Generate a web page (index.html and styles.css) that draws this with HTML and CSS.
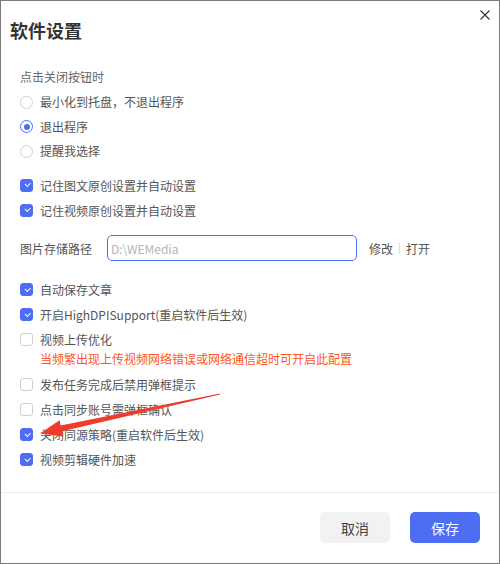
FILE: index.html
```html
<!DOCTYPE html>
<html lang="zh-CN">
<head>
    <meta charset="UTF-8">
    <meta name="viewport" content="width=device-width, initial-scale=1.0">
    <title>软件设置</title>
    <link rel="stylesheet" href="styles.css">
</head>
<body>
    <div class="dialog">
        <div class="dialog-header">
            <h1 class="dialog-title">软件设置</h1>
            <button class="close-btn" aria-label="关闭">
                <svg width="10" height="10" viewBox="0 0 10 10"><path d="M0.5 0.5 L9.5 9.5 M9.5 0.5 L0.5 9.5" stroke="#333" stroke-width="1.1" fill="none"/></svg>
            </button>
        </div>

        <div class="dialog-body">
            <div class="section-label">点击关闭按钮时</div>
            <div class="group radios">
                <label class="row"><span class="radio"></span>最小化到托盘，不退出程序</label>
                <label class="row"><span class="radio on"></span>退出程序</label>
                <label class="row"><span class="radio"></span>提醒我选择</label>
            </div>

            <div class="group checks-a">
                <label class="row"><span class="check on"></span>记住图文原创设置并自动设置</label>
                <label class="row"><span class="check on"></span>记住视频原创设置并自动设置</label>
            </div>

            <div class="path-row">
                <span class="path-label">图片存储路径</span>
                <input class="path-input" type="text" value="D:\WEMedia" readonly>
                <a class="link">修改</a>
                <span class="sep"></span>
                <a class="link">打开</a>
            </div>

            <div class="group checks-b">
                <label class="row"><span class="check on"></span>自动保存文章</label>
                <label class="row"><span class="check on"></span>开启HighDPISupport(重启软件后生效)</label>
                <label class="row"><span class="check"></span>视频上传优化</label>
                <div class="warning">当频繁出现上传视频网络错误或网络通信超时可开启此配置</div>
                <label class="row"><span class="check"></span>发布任务完成后禁用弹框提示</label>
                <label class="row"><span class="check"></span>点击同步账号需弹框确认</label>
                <label class="row"><span class="check on"></span>关闭同源策略(重启软件后生效)</label>
                <label class="row"><span class="check on"></span>视频剪辑硬件加速</label>
            </div>
        </div>

        <div class="dialog-footer">
            <button class="btn btn-cancel">取消</button>
            <button class="btn btn-save">保存</button>
        </div>
    </div>

    <svg class="annotation" width="500" height="564" viewBox="0 0 500 564">
        <polygon points="220.1,394.5 219.9,393.4 60.6,425.6 59.6,420.2 40,433.5 63.4,436.4 62.2,431.2" fill="#ee3b2c"/>
    </svg>
</body>
</html>
```

FILE: styles.css
```css
* { box-sizing: border-box; }
html, body { margin: 0; padding: 0; }
body { width: 500px; height: 564px; background: #fff; font-family: "Noto Sans CJK SC", "Noto Sans", sans-serif; font-size: 12px; color: #555; }

.dialog { width: 500px; height: 564px; border: 1px solid #7b7b7b; display: flex; flex-direction: column; }

.dialog-header { display: flex; justify-content: space-between; align-items: flex-start; padding: 0 9px 0 9px; }
.dialog-title { margin: 17px 0 0 0; font-size: 18px; line-height: 24px; font-weight: bold; color: #333; }
.close-btn { margin-top: 9px; width: 10px; height: 10px; padding: 0; border: none; background: none; display: flex; cursor: pointer; }

.dialog-body { flex: 1; padding-left: 19px; }
.section-label { margin-top: 25px; height: 20px; line-height: 20px; color: #666; }

.row { display: flex; align-items: center; gap: 7px; height: 25px; line-height: 25px; white-space: nowrap; }
.radios { margin-top: 3px; }
.radios .row { height: 24.5px; line-height: 24.5px; }
.checks-a { margin-top: 9px; }
.checks-b { margin-top: 16px; }

.radio { width: 13px; height: 13px; border: 1px solid #cfcfcf; border-radius: 50%; background: #fff; display: flex; align-items: center; justify-content: center; flex: none; }
.radio.on { border-color: #4d6ef2; }
.radio.on::after { content: ""; width: 6px; height: 6px; border-radius: 50%; background: #4d6ef2; }

.check { width: 13px; height: 13px; border: 1px solid #cfcfcf; border-radius: 3px; background: #fff; position: relative; flex: none; }
.check.on { background: #4d6ef2; border-color: #4d6ef2; }
.check.on::after { content: ""; position: absolute; left: 3.5px; top: 2.5px; width: 4px; height: 2.5px; border-left: 1.2px solid #fff; border-bottom: 1.2px solid #fff; transform: rotate(-45deg); }

.path-row { display: flex; align-items: center; margin-top: 12.5px; height: 26px; }
.path-label { width: 72px; margin-right: 15px; }
.path-input { width: 250px; height: 26px; border: 1px solid #4d6ef2; border-radius: 5px; padding: 0 3px; font-family: inherit; font-size: 12px; color: #b5b5b5; outline: none; }
.link { margin-left: 12px; color: #555; cursor: pointer; }
.sep { width: 1px; height: 11px; background: #ddd; margin-left: 6px; }
.sep + .link { margin-left: 6px; }

.warning { padding-left: 20px; height: 20px; line-height: 14px; color: #ff5521; white-space: nowrap; }

.dialog-footer { border-top: 1px solid #ececec; padding: 19px 19px 0 0; height: 71px; display: flex; justify-content: flex-end; gap: 20px; }
.btn { width: 70px; height: 31px; border: none; border-radius: 5px; font-family: inherit; font-size: 14px; cursor: pointer; }
.btn-cancel { background: #f2f2f2; color: #444; }
.btn-save { background: #4d6ef2; color: #fff; }

.annotation { position: absolute; left: 0; top: 0; pointer-events: none; }
```
